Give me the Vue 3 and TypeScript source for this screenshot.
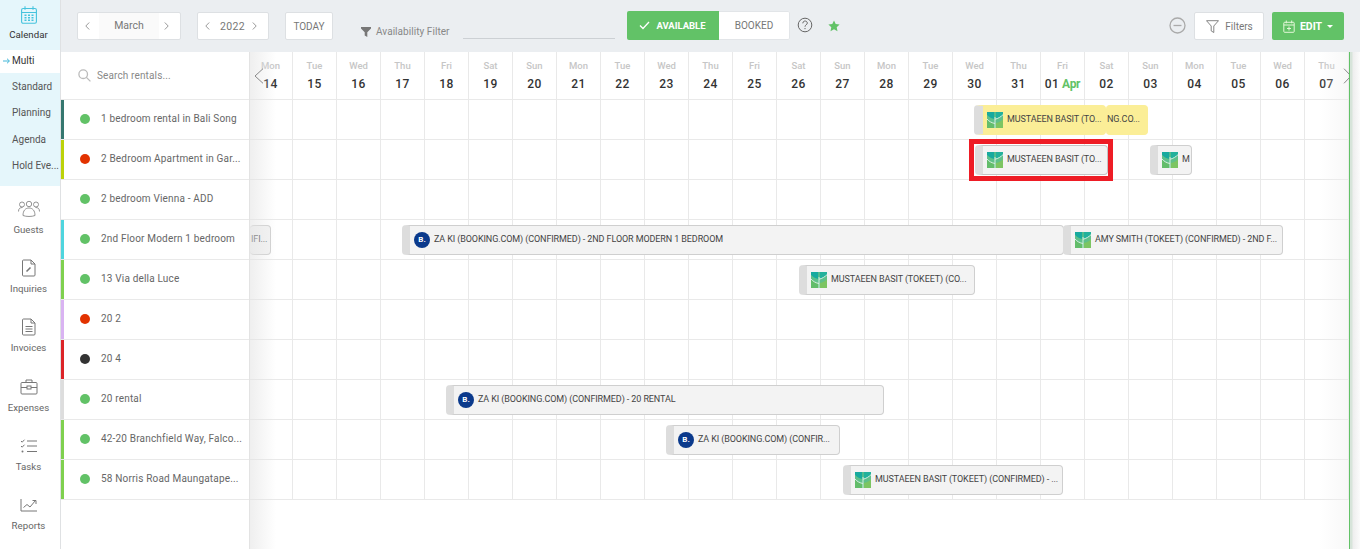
<script setup lang="ts">
interface Rental { name: string; status: string; stripe: string }
interface Booking { row: number; left: number; width: number; text: string; kind: 'tokeet' | 'booking' | 'none'; yellow?: boolean; selected?: boolean; noGrip?: boolean }

const dayNames = ['Mon', 'Tue', 'Wed', 'Thu', 'Fri', 'Sat', 'Sun']
const dayNums = ['14', '15', '16', '17', '18', '19', '20', '21', '22', '23', '24', '25', '26', '27', '28', '29', '30', '31', '01', '02', '03', '04', '05', '06', '07']
const days = dayNums.map((num, i) => ({ num, name: dayNames[i % 7] }))

const green = '#62c267'
const rentals: Rental[] = [
  { name: '1 bedroom rental in Bali Song', status: green, stripe: '#35776f' },
  { name: '2 Bedroom Apartment in Gar...', status: '#e23200', stripe: '#bcd20a' },
  { name: '2 bedroom Vienna - ADD', status: green, stripe: '#ffffff' },
  { name: '2nd Floor Modern 1 bedroom', status: green, stripe: '#4fd5de' },
  { name: '13 Via della Luce', status: green, stripe: '#7fd04f' },
  { name: '20 2', status: '#e23200', stripe: '#d9b3f2' },
  { name: '20 4', status: '#333333', stripe: '#dc2428' },
  { name: '20 rental', status: green, stripe: '#dddddd' },
  { name: '42-20 Branchfield Way, Falco...', status: green, stripe: '#7fd04f' },
  { name: '58 Norris Road Maungatape...', status: green, stripe: '#7fd04f' },
]

const bookings: Booking[] = [
  { row: 0, left: 856, width: 42, text: 'NG.CO...', kind: 'none', yellow: true, noGrip: true },
  { row: 0, left: 724, width: 132, text: 'MUSTAEEN BASIT (TO...', kind: 'tokeet', yellow: true },
  { row: 1, left: 725, width: 133, text: 'MUSTAEEN BASIT (TO...', kind: 'tokeet', selected: true },
  { row: 1, left: 900, width: 42, text: 'M', kind: 'tokeet' },
  { row: 3, left: 0, width: 21, text: 'IFI...', kind: 'none', noGrip: true },
  { row: 3, left: 152, width: 662, text: 'ZA KI (BOOKING.COM) (CONFIRMED) - 2ND FLOOR MODERN 1 BEDROOM', kind: 'booking' },
  { row: 3, left: 813, width: 220, text: 'AMY SMITH (TOKEET) (CONFIRMED) - 2ND F...', kind: 'tokeet' },
  { row: 4, left: 549, width: 176, text: 'MUSTAEEN BASIT (TOKEET) (CO...', kind: 'tokeet' },
  { row: 7, left: 196, width: 438, text: 'ZA KI (BOOKING.COM) (CONFIRMED) - 20 RENTAL', kind: 'booking' },
  { row: 8, left: 416, width: 174, text: 'ZA KI (BOOKING.COM) (CONFIR...', kind: 'booking' },
  { row: 9, left: 593, width: 220, text: 'MUSTAEEN BASIT (TOKEET) (CONFIRMED) - ...', kind: 'tokeet' },
]

const subMenu = ['Standard', 'Planning', 'Agenda', 'Hold Eve...']
const navItems = ['Guests', 'Inquiries', 'Invoices', 'Expenses', 'Tasks', 'Reports']

function bookingStyle(b: Booking) {
  return { left: b.left + 'px', top: 48 + b.row * 40 + 5 + 'px', width: b.width + 'px' }
}
</script>

<template>
  <div class="page">
    <aside class="sidebar">
      <div class="cal-block">
        <div class="nav-head">
          <svg width="16" height="18" viewBox="0 0 16 18" fill="none" stroke="#45c3dd" stroke-width="1.100">
            <rect x=".6" y="2.500" width="14.800" height="14.800" rx="1.500" />
            <path d="M.6 6.500h14.800M4 .3v3.500M12 .3v3.500" />
            <path d="M3.500 9.200h2M7 9.200h2M10.500 9.200h2M3.500 11.700h2M7 11.700h2M10.500 11.700h2M3.500 14.200h2M7 14.200h2M10.500 14.200h2" stroke-width="1.600" />
          </svg>
          <span>Calendar</span>
        </div>
        <div class="sub active">
          <svg class="arrow" width="7" height="6" viewBox="0 0 7 6" fill="none" stroke="#45b7d8" stroke-width="1"><path d="M0 3h6.300M4 .7l2.400 2.300-2.400 2.300" /></svg>
          Multi
        </div>
        <div class="sub" v-for="s in subMenu" :key="s">{{ s }}</div>
      </div>
      <nav class="nav">
        <div class="nav-item" v-for="n in navItems" :key="n">
          <svg v-if="n === 'Guests'" width="22" height="16" viewBox="0 0 22 16" fill="none" stroke="#888" stroke-width=".9">
            <circle cx="4" cy="3.500" r="2.500" /><circle cx="11" cy="3" r="2.700" /><circle cx="18" cy="3.500" r="2.500" />
            <path d="M.5 10.500c0-3 1.500-4 4-4M21.500 10.500c0-3-1.500-4-4-4M5 14.500c0-5 2.500-7.500 6-7.500s6 2.500 6 7.500c-3 1.300-9 1.300-12 0z" />
          </svg>
          <svg v-else-if="n === 'Inquiries'" width="14" height="18" viewBox="0 0 14 18" fill="none" stroke="#777" stroke-width="1">
            <path d="M1.500 1h7.500l4 4v11a1 1 0 0 1-1 1h-10.500a1 1 0 0 1-1-1v-14a1 1 0 0 1 1-1zM9 1v4h4" />
            <path d="M4.500 12.500l4-4" stroke-width="1.600" />
          </svg>
          <svg v-else-if="n === 'Invoices'" width="14" height="18" viewBox="0 0 14 18" fill="none" stroke="#777" stroke-width="1">
            <path d="M1.500 1h7.500l4 4v11a1 1 0 0 1-1 1h-10.500a1 1 0 0 1-1-1v-14a1 1 0 0 1 1-1zM9 1v4h4" />
            <path d="M3.500 8.500h7M3.500 11h7M3.500 13.500h7" />
          </svg>
          <svg v-else-if="n === 'Expenses'" width="18" height="16" viewBox="0 0 18 16" fill="none" stroke="#777" stroke-width="1">
            <rect x="1" y="3.500" width="16" height="11.500" rx="1" />
            <path d="M6 3.500v-2.500h6v2.500M1 8.500h6M11 8.500h6" />
            <rect x="7" y="7" width="4" height="3" />
          </svg>
          <svg v-else-if="n === 'Tasks'" width="18" height="14" viewBox="0 0 18 14" fill="none" stroke="#777" stroke-width="1">
            <path d="M1 2l1.200 1.200 2.300-2.500M1 7l1.200 1.200 2.300-2.500M7 2h10M7 7h10M7 12.500h10" />
            <circle cx="2.500" cy="12.500" r="1" fill="#777" stroke="none" />
          </svg>
          <svg v-else width="18" height="14" viewBox="0 0 18 14" fill="none" stroke="#777" stroke-width="1">
            <path d="M1 1v12h16M3.500 9.500l3.500-3 3 2.500 5.500-6.500M12.500 2.500h3.500v3.500" />
          </svg>
          <span>{{ n }}</span>
        </div>
      </nav>
    </aside>

    <main class="main">
      <header class="toolbar">
        <div class="btn month">
          <svg class="chev" width="5" height="8" viewBox="0 0 5 8" fill="none" stroke="#999"><path d="M4.200.5l-3.400 3.500 3.400 3.500" /></svg>
          <span class="month-name">March</span>
          <svg class="chev" width="5" height="8" viewBox="0 0 5 8" fill="none" stroke="#999"><path d="M.8.500l3.400 3.500-3.400 3.500" /></svg>
        </div>
        <div class="btn year">
          <svg class="chev" width="5" height="8" viewBox="0 0 5 8" fill="none" stroke="#999"><path d="M4.200.5l-3.400 3.500 3.400 3.500" /></svg>
          <span class="year-num">2022</span>
          <svg class="chev" width="5" height="8" viewBox="0 0 5 8" fill="none" stroke="#999"><path d="M.8.500l3.400 3.500-3.400 3.500" /></svg>
        </div>
        <div class="btn today">TODAY</div>
        <div class="avail">
          <svg width="10" height="10" viewBox="0 0 10 10"><path d="M0 0h10v1.500l-3.700 3.700v4.800l-2.600-1.500v-3.300l-3.700-3.700z" fill="#777" /></svg>
          <span>Availability Filter</span>
        </div>
        <div class="avail-line"></div>
        <div class="toggle">
          <div class="t-on">
            <svg width="11" height="9" viewBox="0 0 11 9" fill="none" stroke="#fff" stroke-width="1.300"><path d="M1 4.500l3 3 6-6.500" /></svg>
            AVAILABLE
          </div>
          <div class="t-off">BOOKED</div>
        </div>
        <svg class="help" width="16" height="16" viewBox="0 0 16 16" fill="none" stroke="#666" stroke-width="1">
          <circle cx="8" cy="8" r="6.800" />
          <path d="M5.800 6.300c0-3 4.500-3 4.500-.2 0 1.700-2.300 1.700-2.300 3.600" />
          <circle cx="8" cy="11.600" r=".7" fill="#666" stroke="none" />
        </svg>
        <svg class="star" width="12" height="12" viewBox="0 0 12 12"><path d="M6 .5l1.700 3.600 3.900.5-2.900 2.700.8 3.900-3.500-2-3.500 2 .8-3.900-2.900-2.700 3.900-.5z" fill="#62c267" /></svg>
        <div class="spacer"></div>
        <svg class="minus" width="17" height="17" viewBox="0 0 17 17" fill="none" stroke="#aaa" stroke-width="1.300">
          <circle cx="8.500" cy="8.500" r="7.500" /><path d="M4.500 8.500h8" />
        </svg>
        <div class="btn filters">
          <svg width="13" height="13" viewBox="0 0 13 13" fill="none" stroke="#777" stroke-width=".9"><path d="M.5.700h12l-4.700 5.300v6.500l-2.600-1.600v-4.900z" /></svg>
          <span>Filters</span>
        </div>
        <div class="edit">
          <svg width="12" height="13" viewBox="0 0 12 13" fill="none" stroke="#e4f7d9" stroke-width="1">
            <rect x=".8" y="2.300" width="10.400" height="10" rx=".8" />
            <path d="M.8 5h10.400M3.300.5v2.800M8.700.5v2.800M6 6.500v4M4 8.500h4" />
          </svg>
          <span>EDIT</span>
          <i class="caret"></i>
        </div>
      </header>

      <div class="body">
        <section class="rentals">
          <div class="search">
            <svg width="13" height="13" viewBox="0 0 13 13" fill="none" stroke="#bbb" stroke-width="1.300">
              <circle cx="5.200" cy="5.200" r="4.300" /><path d="M8.400 8.400l4 4" />
            </svg>
            <span>Search rentals...</span>
          </div>
          <div class="rental" v-for="r in rentals" :key="r.name">
            <i class="stripe" :style="{ background: r.stripe }"></i>
            <i class="dot" :style="{ background: r.status }"></i>
            <span>{{ r.name }}</span>
          </div>
        </section>

        <section class="timeline">
          <div class="days">
            <div class="day" v-for="d in days" :key="d.num">
              <span class="d-name">{{ d.name }}</span>
              <span class="d-num">{{ d.num }}<b v-if="d.num === '01'"> Apr</b></span>
            </div>
          </div>
          <div class="grid-row" v-for="r in rentals" :key="r.name">
            <div class="cell" v-for="d in days" :key="d.num"></div>
          </div>

          <template v-for="b in bookings" :key="b.row + '-' + b.left">
            <div
              class="booking"
              :class="{ yellow: b.yellow, selected: b.selected, 'no-grip': b.noGrip }"
              :style="bookingStyle(b)"
            >
              <svg v-if="b.kind === 'tokeet'" class="logo" width="16" height="16" viewBox="0 0 16 16">
                <rect width="16" height="16" fill="#5fc08a" />
                <path d="M0 0h7.200v7c-3.500-.5-6-2.500-7.200-4.500z" fill="#17aa9f" />
                <path d="M8.800 0h7.200v2.500c-1 2-3.700 4-7.200 4.500z" fill="#23b19c" />
                <path d="M0 7c1.500 2 4 3.500 7.200 4v5h-7.200z" fill="#63bd6b" />
                <path d="M16 7c-1.500 2-4 3.500-7.200 4v5h7.200z" fill="#7cc562" />
                <path d="M8 16v-11M8 11.500c-3-.5-6-2-8-4.500M8 7.200c3-.5 6-2.500 8-4.500" stroke="#d8efe2" stroke-width="1" fill="none" />
              </svg>
              <span v-else-if="b.kind === 'booking'" class="b-logo">B.</span>
              <span class="b-text">{{ b.text }}</span>
            </div>
            <div
              v-if="b.selected"
              class="sel-frame"
              :style="{ left: b.left - 6 + 'px', top: 48 + b.row * 40 - 1 + 'px' }"
            ></div>
          </template>

          <div class="fade left"></div>
          <div class="fade right"></div>
          <svg class="pager prev" width="10" height="16" viewBox="0 0 10 16" fill="none" stroke="#888" stroke-width="1"><path d="M9 .7l-8 7.300 8 7.300" /></svg>
          <svg class="pager next" width="9" height="16" viewBox="0 0 9 16" fill="none" stroke="#888" stroke-width="1"><path d="M1 .7l7 7.300-7 7.300" /></svg>
          <div class="edge"></div>
        </section>
      </div>
    </main>
  </div>
</template>

<style>
html, body { margin: 0; overflow: hidden; background: #fff; }
</style>

<style scoped>
.page {
  display: flex;
  width: 1360px;
  height: 549px;
  font-family: Roboto, "Liberation Sans", sans-serif;
  color: #555;
  overflow: hidden;
}
.sidebar {
  width: 60px;
  flex: none;
  border-right: 1px solid #dfe1e3;
  background: #fff;
}
.cal-block {
  background: #e5f6fb;
  height: 186px;
}
.nav-head {
  height: 50px;
  display: flex;
  flex-direction: column;
  align-items: center;
  padding: 6px 3px 0 0;
  box-sizing: border-box;
  font-size: 9.700px;
  color: #333;
}
.nav-head span { margin-top: 5px; }
.sub {
  height: 26.300px;
  line-height: 28.500px;
  padding-left: 12px;
  font-size: 10px;
  color: #555;
  white-space: nowrap;
}
.sub.active {
  position: relative;
  background: #fff;
  color: #333;
  height: 23px;
  line-height: 21px;
}
.arrow {
  position: absolute;
  left: 3px;
  top: 8px;
}
.nav {
  display: flex;
  flex-direction: column;
  padding-top: 13px;
}
.nav-item {
  height: 59.200px;
  display: flex;
  flex-direction: column;
  align-items: center;
  padding-right: 3px;
  font-size: 9.700px;
  color: #666;
}
.nav-item svg { height: 20px; }
.nav-item span { margin-top: 5px; }

.main { flex: 1; min-width: 0; display: flex; flex-direction: column; }
.toolbar {
  height: 52px;
  flex: none;
  background: #ebeef1;
  display: flex;
  align-items: flex-start;
  padding: 12px 16px 0 16px;
  box-sizing: border-box;
  font-size: 10px;
}
.btn {
  height: 28px;
  box-sizing: border-box;
  background: #fff;
  border: 1px solid #dde0e3;
  border-radius: 2px;
  display: flex;
  align-items: center;
  color: #777;
  font-size: 10px;
}
.chev { flex: none; }
.month { width: 104px; padding: 0 11px 0 7px; justify-content: space-between; }
.month-name {
  width: 60px;
  margin-left: 4px;
  text-align: center;
  background: #fafafa;
  line-height: 26px;
  font-size: 10.500px;
}
.year { width: 72px; margin-left: 16px; padding: 0 11px 0 7px; justify-content: space-between; font-size: 10.500px; letter-spacing: .4px; }
.year-num { margin-left: 3px; }
.today { width: 48px; margin-left: 16px; justify-content: center; }
.avail {
  margin-left: 28px;
  margin-top: 14px;
  display: flex;
  align-items: center;
  gap: 5px;
  color: #888;
  font-size: 10px;
  letter-spacing: .05px;
}
.avail-line {
  width: 152px;
  margin-left: 13px;
  height: 26px;
  border-bottom: 1px solid #ccd0d4;
}
.toggle {
  margin-left: 12px;
  margin-top: -1px;
  height: 29px;
  width: 163px;
  display: flex;
  border-radius: 2px;
  overflow: hidden;
  background: #fff;
  font-size: 9.500px;
  box-shadow: 0 0 0 1px #e2e5e8 inset;
}
.t-on {
  width: 92px;
  background: #62c267;
  color: #fff;
  font-weight: 700;
  display: flex;
  align-items: center;
  justify-content: center;
  gap: 6px;
}
.t-off { flex: 1; display: flex; align-items: center; justify-content: center; color: #777; font-size: 10px; }
.help { margin: 5px 0 0 7px; }
.star { margin: 8px 0 0 15px; }
.spacer { flex: 1; }
.minus { margin: 5px 8px 0 0; }
.filters { width: 70px; justify-content: center; gap: 6px; padding-left: 1px; }
.edit {
  margin-left: 8px;
  width: 72px;
  height: 28px;
  background: #62c267;
  border-radius: 2px;
  color: #fff;
  font-weight: 700;
  font-size: 10.500px;
  display: flex;
  align-items: center;
  justify-content: center;
  gap: 5px;
}
.caret {
  border-top: 3px solid #fff;
  border-left: 3px solid transparent;
  border-right: 3px solid transparent;
}

.body { flex: 1; display: flex; min-height: 0; }
.rentals { width: 188px; flex: none; border-right: 1px solid #e3e3e3; }
.search {
  height: 48px;
  display: flex;
  align-items: center;
  gap: 6px;
  padding-left: 17px;
  box-sizing: border-box;
  border-bottom: 1px solid #e9e9e9;
  color: #888;
  font-size: 10px;
  letter-spacing: .13px;
}
.rental {
  position: relative;
  height: 40px;
  box-sizing: border-box;
  border-bottom: 1px solid #e9e9e9;
  display: flex;
  align-items: center;
  padding: 0 0 2px 19px;
  font-size: 10px;
  letter-spacing: .18px;
  color: #666;
  white-space: nowrap;
}
.stripe { position: absolute; left: 0; top: 0; bottom: 0; width: 3px; }
.dot { width: 10px; height: 10px; border-radius: 50%; margin-right: 11px; flex: none; }

.timeline { position: relative; flex: 1; overflow: hidden; }
.days, .grid-row { display: flex; width: 1100px; margin-left: -1px; }
.days { height: 48px; border-bottom: 1px solid #e9e9e9; box-sizing: border-box; }
.grid-row { height: 40px; border-bottom: 1px solid #e9e9e9; box-sizing: border-box; }
.day, .cell { width: 44px; flex: none; border-right: 1px solid #e9e9e9; box-sizing: border-box; }
.day {
  display: flex;
  flex-direction: column;
  align-items: center;
  padding-top: 8px;
}
.d-name { font-size: 9.500px; line-height: 12px; color: #c6c6c6; font-weight: 500; }
.d-num { font-size: 12px; line-height: 14px; margin-top: 5px; color: #333; font-weight: 500; letter-spacing: .5px; white-space: nowrap; }
.d-num b { color: #62c267; font-weight: 700; letter-spacing: -.3px; }

.booking {
  position: absolute;
  height: 30px;
  box-sizing: border-box;
  background: #f3f3f3;
  border: 1px solid #cfcfcf;
  border-left: 8px solid #dddddd;
  border-radius: 4px;
  display: flex;
  align-items: center;
  padding-left: 4px;
  font-size: 9px;
  color: #444;
  overflow: hidden;
  white-space: nowrap;
}
.booking.no-grip { border-left: 0; padding-left: 1px; }
.booking.yellow { background: #fbee97; border-color: #fbee97; border-left: 9px solid #dddddd; }
.booking.yellow.no-grip { border-left: 0; }
.booking.selected { border-color: #c4c4c4; border-left-color: #dddddd; }
.sel-frame {
  position: absolute;
  width: 144px;
  height: 42px;
  box-sizing: border-box;
  border: 5px solid #ee1c25;
  pointer-events: none;
}
.logo { flex: none; margin-right: 4px; }
.b-logo {
  width: 16px;
  height: 16px;
  flex: none;
  border-radius: 50%;
  background: #0b3a8c;
  color: #fff;
  font-size: 8px;
  font-weight: 700;
  text-align: center;
  line-height: 16px;
  margin-right: 4px;
}
.b-text { letter-spacing: -.1px; margin-top: -2px; }

.fade { position: absolute; top: 0; bottom: 0; pointer-events: none; }
.fade.left { left: 0; width: 26px; background: linear-gradient(to right, rgba(228,228,228,.6), rgba(255,255,255,0)); }
.fade.right { right: 11px; width: 30px; background: linear-gradient(to left, rgba(240,240,240,.5), rgba(255,255,255,0)); }
.pager { position: absolute; top: 16px; }
.pager.prev { left: 4px; }
.pager.next { left: 1093px; }
.edge {
  position: absolute;
  top: 0;
  bottom: 0;
  left: 1099px;
  width: 12px;
  border-left: 1px solid #62c267;
  background: linear-gradient(to right, #d7e4da 2px, #eeeeee 3px, #ffffff);
}
</style>
